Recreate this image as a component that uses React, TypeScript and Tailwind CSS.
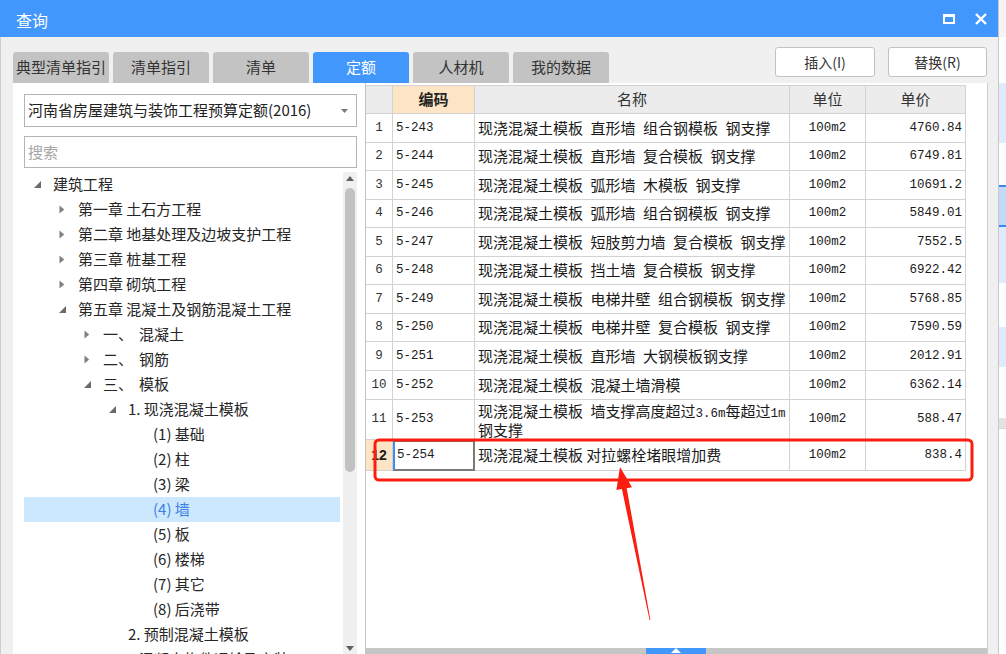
import React from "react";

type TreeRow = { l: number; t?: "c" | "e"; num?: string; text: string; sel?: boolean };

const tree: TreeRow[] = [
  { l: 0, t: "e", text: "建筑工程" },
  { l: 1, t: "c", text: "第一章 土石方工程" },
  { l: 1, t: "c", text: "第二章 地基处理及边坡支护工程" },
  { l: 1, t: "c", text: "第三章 桩基工程" },
  { l: 1, t: "c", text: "第四章 砌筑工程" },
  { l: 1, t: "e", text: "第五章 混凝土及钢筋混凝土工程" },
  { l: 2, t: "c", num: "一、", text: "混凝土" },
  { l: 2, t: "c", num: "二、", text: "钢筋" },
  { l: 2, t: "e", num: "三、", text: "模板" },
  { l: 3, t: "e", text: "1. 现浇混凝土模板" },
  { l: 4, text: "(1) 基础" },
  { l: 4, text: "(2) 柱" },
  { l: 4, text: "(3) 梁" },
  { l: 4, text: "(4) 墙", sel: true },
  { l: 4, text: "(5) 板" },
  { l: 4, text: "(6) 楼梯" },
  { l: 4, text: "(7) 其它" },
  { l: 4, text: "(8) 后浇带" },
  { l: 3, text: "2. 预制混凝土模板" },
  { l: 2, t: "c", num: "四、", text: "混凝土构件运输及安装" },
];

const pads = ["pl-[5px]", "pl-[30px]", "pl-[55px]", "pl-[80px]", "pl-[105px]"];

const rows: [string, string, string, string, string, string][] = [
  ["1", "5-243", "现浇混凝土模板 直形墙 组合钢模板 钢支撑", "100m2", "4760.84", "h-[29px]"],
  ["2", "5-244", "现浇混凝土模板 直形墙 复合模板 钢支撑", "100m2", "6749.81", "h-[28px]"],
  ["3", "5-245", "现浇混凝土模板 弧形墙 木模板 钢支撑", "100m2", "10691.2", "h-[29px]"],
  ["4", "5-246", "现浇混凝土模板 弧形墙 组合钢模板 钢支撑", "100m2", "5849.01", "h-[28px]"],
  ["5", "5-247", "现浇混凝土模板 短肢剪力墙 复合模板 钢支撑", "100m2", "7552.5", "h-[29px]"],
  ["6", "5-248", "现浇混凝土模板 挡土墙 复合模板 钢支撑", "100m2", "6922.42", "h-[28px]"],
  ["7", "5-249", "现浇混凝土模板 电梯井壁 组合钢模板 钢支撑", "100m2", "5768.85", "h-[29px]"],
  ["8", "5-250", "现浇混凝土模板 电梯井壁 复合模板 钢支撑", "100m2", "7590.59", "h-[28px]"],
  ["9", "5-251", "现浇混凝土模板 直形墙 大钢模板钢支撑", "100m2", "2012.91", "h-[29px]"],
  ["10", "5-252", "现浇混凝土模板 混凝土墙滑模", "100m2", "6362.14", "h-[29px]"],
];

const MONO = "font-['Liberation_Mono',monospace] text-[12.5px]";

function Mixed({ s }: { s: string }) {
  const parts = s.split(/([\x20-\x7e]+)/).filter(Boolean);
  return (
    <>
      {parts.map((p, i) =>
        /^[\x20-\x7e]+$/.test(p) ? (
          <span key={i} className={`${MONO} whitespace-pre`}>
            {p}
          </span>
        ) : (
          <span key={i}>{p}</span>
        )
      )}
    </>
  );
}

function Tri({ t }: { t?: "c" | "e" }) {
  if (t === "c")
    return (
      <svg width="6" height="9" viewBox="0 0 6 9">
        <path d="M0.5 0.5L5.2 4.5L0.5 8.5Z" fill="#7f7f7f" />
      </svg>
    );
  if (t === "e")
    return (
      <svg width="7" height="7" viewBox="0 0 7 7">
        <path d="M7 0V7H0Z" fill="#6a6a6a" />
      </svg>
    );
  return null;
}

const cell = "border-r border-b border-[#d2d2d2] flex items-center";

export default function App() {
  const tabs = ["典型清单指引", "清单指引", "清单", "定额", "人材机", "我的数据"];
  return (
    <div className="relative w-[1006px] h-[654px] overflow-hidden flex font-['Noto_Sans_CJK_SC','Noto_Sans',sans-serif] text-[#2b2b2b]">
      {/* main window */}
      <div className="w-[998px] h-full flex flex-col bg-[#f0f0f0] border-l border-[#cfcfcf]">
        {/* title bar */}
        <div className="h-[37px] shrink-0 bg-[#4297fd] flex items-center pl-[16px] pr-[11px] text-white -ml-px">
          <span className="text-[16px] mt-[3px]">查询</span>
          <div className="ml-auto flex items-center gap-[20px]">
            <svg width="12" height="10" viewBox="0 0 12 10">
              <rect x="1" y="1.5" width="10" height="7.5" stroke="white" strokeWidth="2" fill="none" />
              <rect x="0" y="0" width="12" height="3" fill="white" />
            </svg>
            <svg width="12" height="12" viewBox="0 0 12 12">
              <path d="M1 1L11 11M11 1L1 11" stroke="white" strokeWidth="2.4" />
            </svg>
          </div>
        </div>

        {/* tabs + buttons */}
        <div className="h-[46px] shrink-0 flex pl-[12px] pr-[11px]">
          <div className="flex gap-[4px] self-end">
            {tabs.map((t) => (
              <div
                key={t}
                className={`w-[96px] h-[31px] rounded-t-[3px] flex items-center justify-center text-[15px] ${
                  t === "定额" ? "bg-[#4297fd] text-white" : "bg-[#c3c3c3] text-[#333]"
                }`}
              >
                {t}
              </div>
            ))}
          </div>
          <div className="ml-auto flex gap-[13px] mt-[10px]">
            <div className="w-[100px] h-[30px] bg-white border border-[#c2c2c2] rounded-[3px] flex items-center justify-center text-[14px] text-[#333]">
              插入(I)
            </div>
            <div className="w-[99px] h-[30px] bg-white border border-[#c2c2c2] rounded-[3px] flex items-center justify-center text-[14px] text-[#333]">
              替换(R)
            </div>
          </div>
        </div>

        {/* content */}
        <div className="flex-1 min-h-0 flex pl-[12px]">
          {/* left panel */}
          <div className="w-[352px] bg-white flex flex-col pl-[11px] pr-[8px] pt-[11px]">
            <div className="h-[33px] shrink-0 border border-[#b4b4b4] flex items-center pl-[3px] pr-[8px] text-[15px] text-[#222]">
              <span>河南省房屋建筑与装饰工程预算定额(2016)</span>
              <svg className="ml-auto" width="7" height="4" viewBox="0 0 7 4">
                <path d="M0 0H7L3.5 4Z" fill="#7a7a7a" />
              </svg>
            </div>
            <div className="h-[32px] shrink-0 mt-[9px] border border-[#b4b4b4] flex items-center pl-[3px] text-[15px] text-[#a5a5a5]">
              搜索
            </div>
            <div className="flex-1 min-h-0 mt-[4px] flex overflow-hidden">
              <div className="flex-1 flex flex-col">
                {tree.map((r, i) => (
                  <div
                    key={i}
                    className={`h-[25px] shrink-0 flex items-center text-[15px] whitespace-nowrap ${pads[r.l]} ${
                      r.sel ? "bg-[#cce8ff] text-[#3b80e2]" : "text-[#262626]"
                    }`}
                  >
                    <div className="w-[16px] flex justify-center items-center">
                      <Tri t={r.t} />
                    </div>
                    <div className="ml-[8px] flex">
                      {r.num && <span className="w-[36px]">{r.num}</span>}
                      <span>{r.text}</span>
                    </div>
                  </div>
                ))}
              </div>
              <div className="w-[14px] ml-[3px] bg-[#f0f0f0] flex flex-col items-center">
                <svg className="mt-[4px]" width="8" height="5" viewBox="0 0 8 5">
                  <path d="M0 5L4 0L8 5Z" fill="#606060" />
                </svg>
                <div className="mt-[7px] w-[10px] h-[284px] rounded-full bg-[#c2c2c2]" />
                <svg className="mt-auto mb-[3px]" width="8" height="5" viewBox="0 0 8 5">
                  <path d="M0 0L4 5L8 0Z" fill="#606060" />
                </svg>
              </div>
            </div>
          </div>

          {/* right panel */}
          <div className="w-[622px] bg-white border-l border-[#c4c4c4] flex flex-col pt-[2px]">
            <div className="w-[600px] border-t border-[#d2d2d2]">
              {/* header */}
              <div className="grid grid-cols-[27px_82px_315px_76px_100px] h-[28px] text-[15px] text-[#333]">
                <div className={`${cell} bg-[#ececec]`} />
                <div className={`${cell} justify-center bg-[#fde4c4] font-bold text-[#222]`}>编码</div>
                <div className={`${cell} justify-center bg-[#ececec]`}>名称</div>
                <div className={`${cell} justify-center bg-[#ececec]`}>单位</div>
                <div className={`${cell} justify-center bg-[#ececec]`}>单价</div>
              </div>
              {rows.map((r) => (
                <div key={r[0]} className={`grid grid-cols-[27px_82px_315px_76px_100px] ${r[5]} text-[15px] text-[#1a1a1a]`}>
                  <div className={`${cell} justify-center ${MONO} text-[#333]`}>{r[0]}</div>
                  <div className={`${cell} pl-[3px] ${MONO}`}>{r[1]}</div>
                  <div className={`${cell} pl-[3px] whitespace-nowrap overflow-hidden`}>
                    <Mixed s={r[2]} />
                  </div>
                  <div className={`${cell} justify-center ${MONO}`}>{r[3]}</div>
                  <div className={`${cell} justify-end pr-[3px] ${MONO}`}>{r[4]}</div>
                </div>
              ))}
              {/* row 11 */}
              <div className="grid grid-cols-[27px_82px_315px_76px_100px] h-[40px] text-[15px] text-[#1a1a1a]">
                <div className={`${cell} justify-center ${MONO} text-[#333]`}>11</div>
                <div className={`${cell} pl-[3px] ${MONO}`}>5-253</div>
                <div className="border-r border-b border-[#d2d2d2] pl-[3px] pt-[3px] leading-[16px] whitespace-nowrap flex flex-col">
                  <span>
                    <Mixed s="现浇混凝土模板 墙支撑高度超过3.6m每超过1m" />
                  </span>
                  <span>钢支撑</span>
                </div>
                <div className={`${cell} justify-center ${MONO}`}>100m2</div>
                <div className={`${cell} justify-end pr-[3px] ${MONO}`}>588.47</div>
              </div>
              {/* row 12 */}
              <div className="grid grid-cols-[27px_82px_315px_76px_100px] h-[31px] text-[15px] text-[#1a1a1a]">
                <div className={`${cell} justify-center bg-[#fde4c4] font-bold font-['Liberation_Sans',sans-serif] text-[14px]`}>12</div>
                <div className="border-2 border-[#7a7a7a] border-l-[#3d8df5] flex items-center pl-[2px] font-['Liberation_Mono',monospace] text-[12.5px]">
                  5-254
                </div>
                <div className={`${cell} pl-[3px] whitespace-nowrap`}>
                  <span>现浇混凝土模板 对拉螺栓堵眼增加费</span>
                </div>
                <div className={`${cell} justify-center ${MONO}`}>100m2</div>
                <div className={`${cell} justify-end pr-[3px] ${MONO}`}>838.4</div>
              </div>
            </div>
            <div className="flex-1" />
            <div className="h-[6px] shrink-0 bg-[#c6c6c6] flex">
              <div className="ml-[280px] w-[60px] h-full bg-[#4297fd] flex justify-center">
                <svg width="10" height="5" viewBox="0 0 10 5">
                  <path d="M0 5L5 0L10 5Z" fill="white" />
                </svg>
              </div>
            </div>
          </div>

          {/* right window strip */}
          <div className="w-[11px] border-l border-[#cfcfcf] bg-[#f0f0f0]" />
        </div>
      </div>

      {/* other application on the right */}
      <div className="w-[8px] h-full flex flex-col border-l border-[#c8c8c8] bg-white">
        <div className="h-[37px] bg-[#f4f4f4]" />
        <div className="h-[46px] bg-white" />
        <div className="h-[60px] bg-[#dfeafb]" />
        <div className="h-[42px] bg-white" />
        <div className="h-[42px] bg-[#c2d9f8] border-y-2 border-[#3a88f5]" />
        <div className="h-[56px] bg-[#dfeafb]" />
        <div className="h-[44px] bg-white" />
        <div className="h-[40px] bg-[#dfeafb]" />
        <div className="h-[51px] bg-white" />
        <div className="h-[10px] bg-[#e3e3e3]" />
        <div className="flex-1 bg-white border-t border-[#d8d8d8]" />
      </div>

      {/* red annotation */}
      <svg className="absolute left-0 top-0 pointer-events-none" width="1006" height="654" viewBox="0 0 1006 654">
        <rect x="375" y="440" width="597" height="40" rx="4" stroke="#fb1e10" strokeWidth="3" fill="none" />
        <path
          d="M620 467 L632 487.3 L626.7 488.2 L650.4 620 L649.6 620 L621.9 489.1 L616.4 490.1 Z"
          fill="#fb1e10"
        />
      </svg>
    </div>
  );
}
